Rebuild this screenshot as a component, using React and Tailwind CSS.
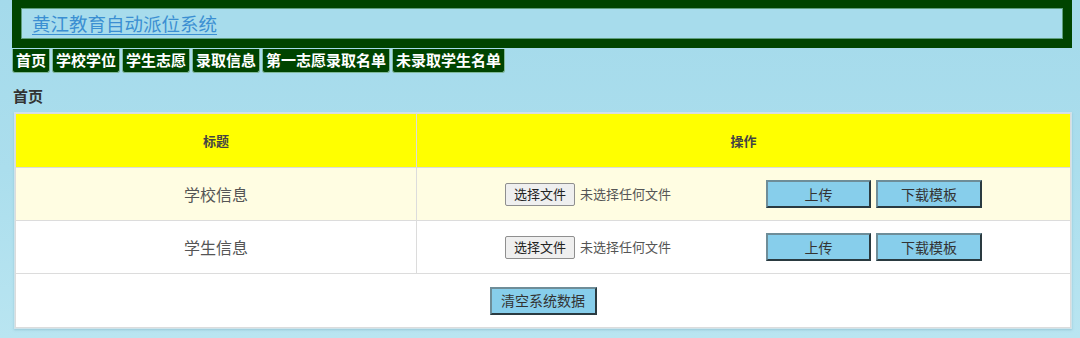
import React from "react";

const font = { fontFamily: '"Microsoft YaHei", "Noto Sans CJK SC", "Noto Sans", sans-serif' };

const tabs = ["首页", "学校学位", "学生志愿", "录取信息", "第一志愿录取名单", "未录取学生名单"];

function FileInput() {
  return (
    <div className="flex items-center w-[257px] shrink-0">
      <span className="h-[23px] px-[8px] flex items-center text-[13px] text-[#222] bg-[#efefef] border border-[#8f8f8f] rounded-[2px]">
        选择文件
      </span>
      <span className="ml-[5px] text-[13px] text-[#555]">未选择任何文件</span>
    </div>
  );
}

function BlueBtn({ children, className = "" }) {
  return (
    <button
      className={
        "h-[28px] bg-[#87ceeb] text-[14px] text-[#333] border-2 border-t-[#6e8d98] border-l-[#6e8d98] border-b-[#2a3a40] border-r-[#2a3a40] " +
        className
      }
      style={font}
    >
      {children}
    </button>
  );
}

function DataRow({ title, bg }) {
  return (
    <tr className={bg}>
      <td className="h-[53px] border border-[#dcdcdc] text-center text-[16px] text-[#555]">{title}</td>
      <td className="h-[53px] border border-[#dcdcdc]">
        <div className="flex items-center justify-center">
          <FileInput />
          <BlueBtn className="w-[105px] ml-[4px]">上传</BlueBtn>
          <BlueBtn className="w-[106px] ml-[5px]">下载模板</BlueBtn>
        </div>
      </td>
    </tr>
  );
}

export default function App() {
  return (
    <div
      className="w-[1080px] h-[338px] overflow-hidden bg-gradient-to-b from-[#a4daeb] via-[#abdeed] to-[#b9e5f1]"
      style={font}
    >
      <div className="ml-[12px] w-[1060px] h-[48px] bg-[#004400] pt-[8px] pb-[9px] px-[9px]">
        <div className="h-full bg-[#a7dcec] border border-[#5e9e7e] flex items-center pl-[10px]">
          <a className="text-[18.5px] leading-none text-[#3b8fd2] underline underline-offset-[3px]">
            黄江教育自动派位系统
          </a>
        </div>
      </div>
      <div className="flex ml-[12px] mt-[1px] gap-[2px]">
        {tabs.map((t) => (
          <div
            key={t}
            className="h-[24px] px-[3px] bg-[#004400] text-white font-bold text-[15px] flex items-center border border-t-0 border-[#7fb79a] rounded-b-[3px]"
          >
            {t}
          </div>
        ))}
      </div>
      <div className="ml-[13px] mt-[13px] text-[15px] font-bold text-[#333] leading-[20px]">首页</div>
      <div className="ml-[14px] mt-[6px] w-[1058px] border border-[#cfe3ea] shadow-[0_1px_2px_rgba(120,170,190,0.5)]">
        <table className="w-full border-collapse">
          <tbody>
            <tr className="bg-[#ffff00]">
              <td className="w-[401px] h-[54px] border border-[#dcdcdc] text-center text-[13px] font-bold text-[#444]">标题</td>
              <td className="h-[54px] border border-[#dcdcdc] text-center text-[13px] font-bold text-[#444]">操作</td>
            </tr>
            <DataRow title="学校信息" bg="bg-[#fffde2]" />
            <DataRow title="学生信息" bg="bg-white" />
            <tr className="bg-white">
              <td colSpan={2} className="h-[54px] border border-[#dcdcdc]">
                <div className="flex justify-center">
                  <BlueBtn className="w-[107px] h-[27px]">清空系统数据</BlueBtn>
                </div>
              </td>
            </tr>
          </tbody>
        </table>
      </div>
    </div>
  );
}
